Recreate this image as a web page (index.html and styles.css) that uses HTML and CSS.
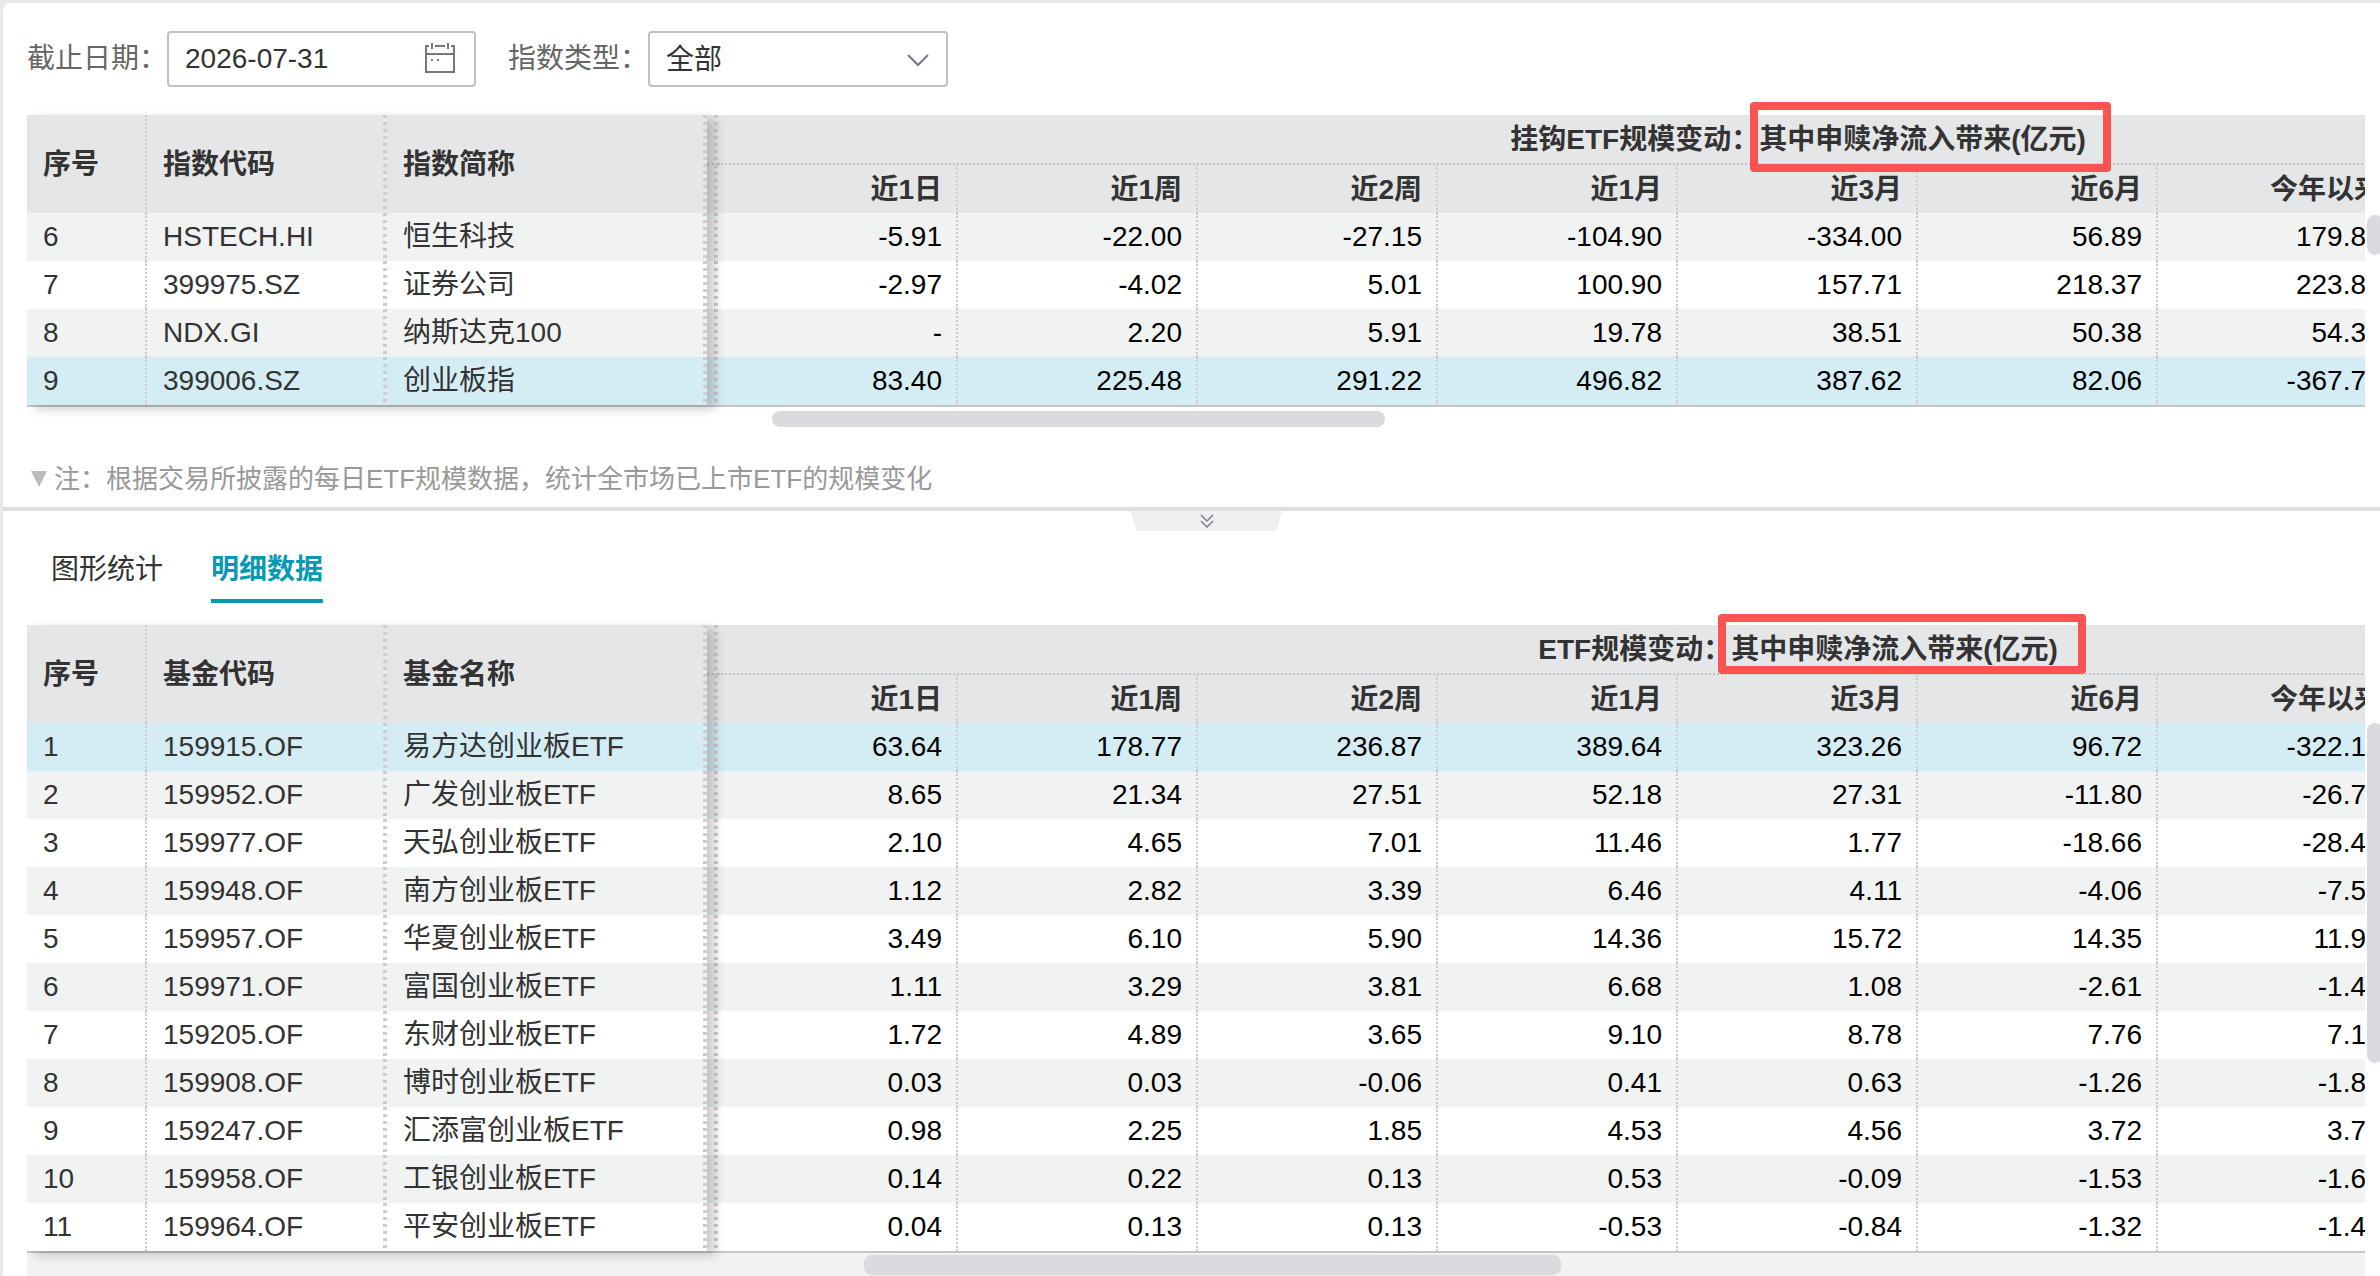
FILE: index.html
```html
<!DOCTYPE html>
<html lang="zh-CN">

<head>
    <meta charset="UTF-8">
    <meta name="viewport" content="width=device-width, initial-scale=1.0">
    <title>指数ETF规模变动</title>
    <link rel="stylesheet" href="styles.css">
</head>

<body>
    <main class="page">
        <section class="panel">
            <form class="filters">
                <label for="end-date">截止日期：</label>
                <div class="field date-field">
                    <input type="text" id="end-date" value="2026-07-31">
                    <svg class="calendar" width="32" height="32" viewBox="0 0 32 32" fill="none" stroke="#737883" stroke-width="2">
                        <path d="M5 3H2V29H30V3H27M11 3H21M2 11H30" />
                        <path d="M8 0V6M24 0V6M7 17H9M13 17H15" />
                    </svg>
                </div>
                <label for="index-type">指数类型：</label>
                <div class="field type-field">
                    <select id="index-type">
                        <option>全部</option>
                    </select>
                    <svg class="chevron" width="22" height="14" viewBox="0 0 22 14" fill="none" stroke="#737883" stroke-width="2">
                        <path d="M1 2L11 12L21 2" />
                    </svg>
                </div>
            </form>

            <div class="grid">
                <div class="grid-body">
                    <table class="stripe-odd">
                        <colgroup>
                            <col class="c-no"><col class="c-code"><col class="c-name"><col class="c-split">
                            <col span="9" class="c-num">
                        </colgroup>
                        <thead>
                            <tr>
                                <th rowspan="2" class="txt">序号</th>
                                <th rowspan="2" class="txt wide">指数代码</th>
                                <th rowspan="2" class="txt wide">指数简称</th>
                                <th class="split group"></th>
                                <th colspan="9" class="group">挂钩ETF规模变动：<span class="mark">其中申赎净流入带来(亿元)<i class="box box-top"></i></span></th>
                            </tr>
                            <tr>
                                <th class="split"></th>
                                <th>近1日</th><th>近1周</th><th>近2周</th><th>近1月</th><th>近3月</th><th>近6月</th><th>今年以来</th>
                            </tr>
                        </thead>
                        <tbody>
                            <tr>
                                <td class="txt">6</td><td class="txt wide">HSTECH.HI</td><td class="txt wide">恒生科技</td><td class="split"></td>
                                <td>-5.91</td><td>-22.00</td><td>-27.15</td><td>-104.90</td><td>-334.00</td><td>56.89</td><td class="ytd">179.8</td>
                            </tr>
                            <tr>
                                <td class="txt">7</td><td class="txt wide">399975.SZ</td><td class="txt wide">证券公司</td><td class="split"></td>
                                <td>-2.97</td><td>-4.02</td><td>5.01</td><td>100.90</td><td>157.71</td><td>218.37</td><td class="ytd">223.8</td>
                            </tr>
                            <tr>
                                <td class="txt">8</td><td class="txt wide">NDX.GI</td><td class="txt wide">纳斯达克100</td><td class="split"></td>
                                <td>-</td><td>2.20</td><td>5.91</td><td>19.78</td><td>38.51</td><td>50.38</td><td class="ytd">54.3</td>
                            </tr>
                            <tr class="active">
                                <td class="txt">9</td><td class="txt wide">399006.SZ</td><td class="txt wide">创业板指</td><td class="split"></td>
                                <td>83.40</td><td>225.48</td><td>291.22</td><td>496.82</td><td>387.62</td><td>82.06</td><td class="ytd">-367.7</td>
                            </tr>
                        </tbody>
                    </table>
                </div>
                <div class="rail"><div class="thumb thumb-index"></div></div>
            </div>
            <div class="track track-index"><div class="thumb"></div></div>

            <p class="note"><svg width="18" height="16" viewBox="0 0 18 16"><path d="M1 0H17L9 16Z" fill="#bbb" /></svg>注：根据交易所披露的每日ETF规模数据，统计全市场已上市ETF的规模变化</p>
        </section>

        <div class="divider">
            <button type="button" class="handle" aria-label="收起">
                <svg width="14" height="14" viewBox="0 0 14 14" fill="none" stroke="#7d7f92" stroke-width="1.5">
                    <path d="M1 1L7 7L13 1M1 7L7 13L13 7" />
                </svg>
            </button>
        </div>

        <section class="panel">
            <nav class="tabs">
                <button type="button" class="tab">图形统计</button>
                <button type="button" class="tab selected">明细数据</button>
            </nav>

            <div class="grid">
                <div class="grid-body">
                    <table class="stripe-even">
                        <colgroup>
                            <col class="c-no"><col class="c-code"><col class="c-name"><col class="c-split">
                            <col span="9" class="c-num">
                        </colgroup>
                        <thead>
                            <tr>
                                <th rowspan="2" class="txt">序号</th>
                                <th rowspan="2" class="txt wide">基金代码</th>
                                <th rowspan="2" class="txt wide">基金名称</th>
                                <th class="split group"></th>
                                <th colspan="9" class="group">ETF规模变动：<span class="mark">其中申赎净流入带来(亿元)<i class="box box-bottom"></i></span></th>
                            </tr>
                            <tr>
                                <th class="split"></th>
                                <th>近1日</th><th>近1周</th><th>近2周</th><th>近1月</th><th>近3月</th><th>近6月</th><th>今年以来</th>
                            </tr>
                        </thead>
                        <tbody>
                            <tr class="active">
                                <td class="txt">1</td><td class="txt wide">159915.OF</td><td class="txt wide">易方达创业板ETF</td><td class="split"></td>
                                <td>63.64</td><td>178.77</td><td>236.87</td><td>389.64</td><td>323.26</td><td>96.72</td><td class="ytd">-322.1</td>
                            </tr>
                            <tr>
                                <td class="txt">2</td><td class="txt wide">159952.OF</td><td class="txt wide">广发创业板ETF</td><td class="split"></td>
                                <td>8.65</td><td>21.34</td><td>27.51</td><td>52.18</td><td>27.31</td><td>-11.80</td><td class="ytd">-26.7</td>
                            </tr>
                            <tr>
                                <td class="txt">3</td><td class="txt wide">159977.OF</td><td class="txt wide">天弘创业板ETF</td><td class="split"></td>
                                <td>2.10</td><td>4.65</td><td>7.01</td><td>11.46</td><td>1.77</td><td>-18.66</td><td class="ytd">-28.4</td>
                            </tr>
                            <tr>
                                <td class="txt">4</td><td class="txt wide">159948.OF</td><td class="txt wide">南方创业板ETF</td><td class="split"></td>
                                <td>1.12</td><td>2.82</td><td>3.39</td><td>6.46</td><td>4.11</td><td>-4.06</td><td class="ytd">-7.5</td>
                            </tr>
                            <tr>
                                <td class="txt">5</td><td class="txt wide">159957.OF</td><td class="txt wide">华夏创业板ETF</td><td class="split"></td>
                                <td>3.49</td><td>6.10</td><td>5.90</td><td>14.36</td><td>15.72</td><td>14.35</td><td class="ytd">11.9</td>
                            </tr>
                            <tr>
                                <td class="txt">6</td><td class="txt wide">159971.OF</td><td class="txt wide">富国创业板ETF</td><td class="split"></td>
                                <td>1.11</td><td>3.29</td><td>3.81</td><td>6.68</td><td>1.08</td><td>-2.61</td><td class="ytd">-1.4</td>
                            </tr>
                            <tr>
                                <td class="txt">7</td><td class="txt wide">159205.OF</td><td class="txt wide">东财创业板ETF</td><td class="split"></td>
                                <td>1.72</td><td>4.89</td><td>3.65</td><td>9.10</td><td>8.78</td><td>7.76</td><td class="ytd">7.1</td>
                            </tr>
                            <tr>
                                <td class="txt">8</td><td class="txt wide">159908.OF</td><td class="txt wide">博时创业板ETF</td><td class="split"></td>
                                <td>0.03</td><td>0.03</td><td>-0.06</td><td>0.41</td><td>0.63</td><td>-1.26</td><td class="ytd">-1.8</td>
                            </tr>
                            <tr>
                                <td class="txt">9</td><td class="txt wide">159247.OF</td><td class="txt wide">汇添富创业板ETF</td><td class="split"></td>
                                <td>0.98</td><td>2.25</td><td>1.85</td><td>4.53</td><td>4.56</td><td>3.72</td><td class="ytd">3.7</td>
                            </tr>
                            <tr>
                                <td class="txt">10</td><td class="txt wide">159958.OF</td><td class="txt wide">工银创业板ETF</td><td class="split"></td>
                                <td>0.14</td><td>0.22</td><td>0.13</td><td>0.53</td><td>-0.09</td><td>-1.53</td><td class="ytd">-1.6</td>
                            </tr>
                            <tr>
                                <td class="txt">11</td><td class="txt wide">159964.OF</td><td class="txt wide">平安创业板ETF</td><td class="split"></td>
                                <td>0.04</td><td>0.13</td><td>0.13</td><td>-0.53</td><td>-0.84</td><td>-1.32</td><td class="ytd">-1.4</td>
                            </tr>
                        </tbody>
                    </table>
                </div>
                <div class="rail"><div class="thumb thumb-fund"></div></div>
            </div>
            <div class="track track-fund"><div class="thumb"></div></div>
        </section>
    </main>
</body>

</html>
```

FILE: styles.css
```css
* {
    box-sizing: border-box;
}

body {
    margin: 0;
    padding: 3px 0 0 3px;
    background-color: #e9e9e9;
    color: #333;
    font-family: "Liberation Sans", "Noto Sans CJK SC", sans-serif;
    font-size: 28px;
    overflow: hidden;
}

.page {
    background-color: #fff;
    border-top-left-radius: 8px;
}

.panel {
    padding-left: 24px;
}

/* filters */
.filters {
    display: flex;
    align-items: center;
    padding: 28px 0;
}

.filters label {
    color: #666;
    line-height: 56px;
}

.field {
    position: relative;
    height: 56px;
}

.date-field {
    width: 309px;
    margin-right: 32px;
}

.type-field {
    width: 300px;
}

.field input,
.field select {
    width: 100%;
    height: 100%;
    padding: 0 16px;
    border: 2px solid #c0c1c6;
    border-radius: 4px;
    background-color: #fff;
    color: #333;
    font: inherit;
    appearance: none;
}

.calendar {
    position: absolute;
    right: 20px;
    top: 12px;
}

.chevron {
    position: absolute;
    right: 19px;
    top: 22px;
    pointer-events: none;
}

/* tables */
.grid {
    display: flex;
}

.grid-body {
    position: relative;
    flex: 1;
    min-width: 0;
    overflow-x: clip;
    border-bottom: 2px solid #c4c5c7;
}

/* shadow of the frozen columns */
.grid-body::before {
    content: "";
    position: absolute;
    top: 0;
    bottom: 0;
    left: 0;
    width: 680px;
    box-shadow: 8px 4px 10px rgba(0, 0, 0, 0.2);
    pointer-events: none;
}

table {
    width: 2851px;
    table-layout: fixed;
    border-collapse: separate;
    border-spacing: 0;
}

.c-no {
    width: 120px;
}

.c-code,
.c-num {
    width: 240px;
}

.c-name {
    width: 320px;
}

.c-split {
    width: 11px;
}

th,
td {
    height: 48px;
    padding: 0 14px 0 0;
    border-right: 2px dotted #d3cacc;
    line-height: 40px;
    text-align: right;
    white-space: nowrap;
}

th {
    padding-top: 2px;
}

td {
    color: #000;
}

thead tr {
    background-color: #e5e6e8;
}

.txt {
    padding-left: 16px;
    color: #333;
    text-align: left;
}

.wide,
.split {
    border-right: 0;
    background: repeating-linear-gradient(#d3cacc 0 3px, transparent 3px 7px) right / 4px 100% no-repeat;
}

.split {
    padding: 0;
}

.group {
    height: 50px;
    border-bottom: 2px dotted #c2c3c5;
    text-align: center;
}

th.group:not(.split) {
    padding-right: 0;
    border-right: 0;
}

.ytd {
    padding-right: 30px;
}

.stripe-odd tbody tr:nth-child(odd),
.stripe-even tbody tr:nth-child(even) {
    background-color: #f1f3f2;
}

table tbody tr.active {
    background-color: #d4edf4;
}

/* red frame round the second half of the group title */
.mark {
    position: relative;
    display: inline-block;
}

.box {
    position: absolute;
    border: 8px solid #fb5252;
    border-radius: 4px;
}

.box-top {
    top: -18px;
    right: -25px;
    bottom: -12px;
    left: -9px;
}

.box-bottom {
    top: -16px;
    right: -28px;
    bottom: -4px;
    left: -13px;
}

/* scrollbars */
.rail {
    width: 15px;
    padding-left: 2px;
    overflow: hidden;
}

.thumb {
    border-radius: 8px;
    background-color: #dadbdf;
}

.rail .thumb {
    width: 16px;
}

.thumb-index {
    height: 40px;
    margin-top: 100px;
}

.thumb-fund {
    height: 340px;
    margin-top: 98px;
}

.track {
    margin-right: 15px;
}

.track-index {
    padding: 4px 0 0 745px;
}

.track-index .thumb {
    width: 613px;
    height: 16px;
}

.track-fund {
    padding: 2px 0 1px 837px;
    background-color: #f1f3f2;
}

.track-fund .thumb {
    width: 697px;
    height: 20px;
}

.note {
    display: flex;
    align-items: center;
    gap: 6px;
    margin: 0;
    padding: 34px 0 10px 3px;
    color: #999;
    font-size: 26px;
    line-height: 36px;
}

/* divider with collapse handle */
.divider {
    position: relative;
    height: 4px;
    background-color: #dedede;
}

.handle {
    position: absolute;
    top: 4px;
    left: calc(50% - 61px);
    display: flex;
    align-items: center;
    justify-content: center;
    width: 152px;
    height: 20px;
    padding: 0;
    border: 0;
    background-color: #f0f0f0;
    clip-path: polygon(0 0, 100% 0, 146px 100%, 6px 100%);
}

/* tabs */
.tabs {
    display: flex;
    gap: 48px;
    padding: 32px 0 22px 24px;
}

.tab {
    height: 60px;
    padding: 0 0 2px;
    border: 0;
    border-bottom: 4px solid transparent;
    background: none;
    color: #333;
    font: inherit;
    line-height: 54px;
}

.tab.selected {
    border-bottom-color: #0599b5;
    color: #0599b5;
    font-weight: bold;
}
```
